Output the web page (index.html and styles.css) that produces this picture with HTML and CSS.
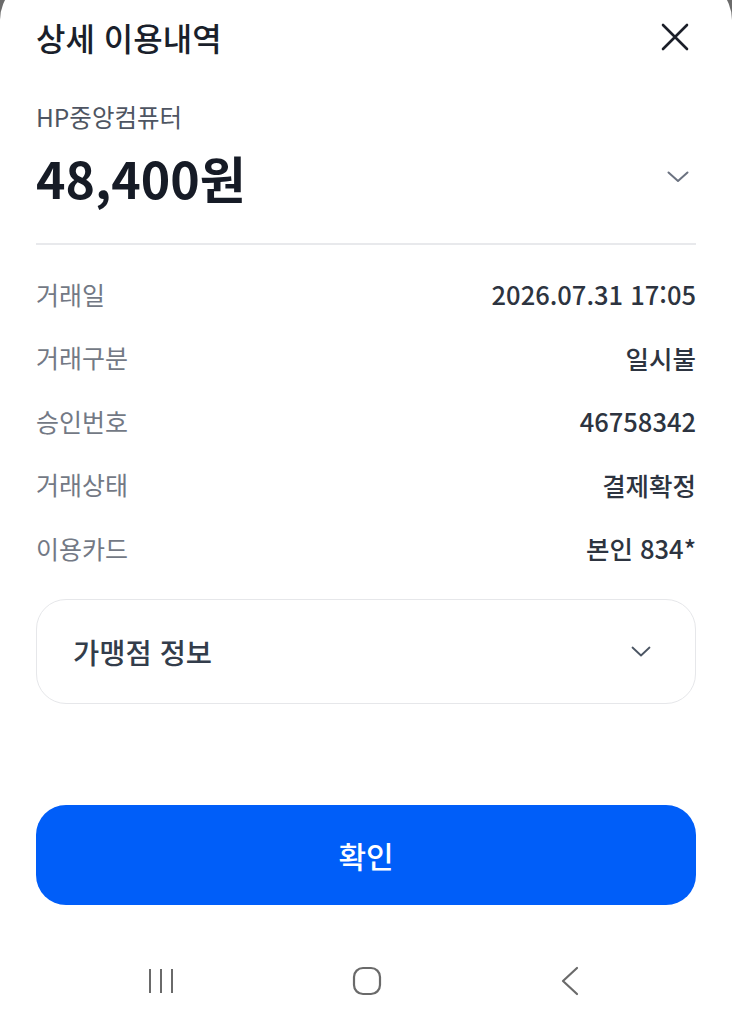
FILE: index.html
```html
<!DOCTYPE html>
<html lang="ko">
<head>
    <meta charset="UTF-8">
    <title>상세 이용내역</title>
    <link rel="stylesheet" href="styles.css">
</head>
<body>
    <div class="sheet">
        <div class="header">
            <h1 class="title">상세 이용내역</h1>
            <button class="close" type="button" aria-label="닫기">
                <svg width="28" height="28" viewBox="0 0 28 28"><path d="M2 2 L26 26 M26 2 L2 26" stroke="#1b1f29" stroke-width="2.6" stroke-linecap="round" fill="none"/></svg>
            </button>
        </div>

        <div class="summary">
            <p class="merchant">HP중앙컴퓨터</p>
            <div class="amount-row">
                <span class="amount">48,400원</span>
                <svg class="chev" width="22" height="12" viewBox="0 0 22 12"><path d="M1.5 1.5 L11 10 L20.5 1.5" stroke="#6b7280" stroke-width="2" stroke-linecap="round" stroke-linejoin="round" fill="none"/></svg>
            </div>
        </div>

        <div class="details">
            <div class="row"><span class="label">거래일</span><span class="value">2026.07.31 17:05</span></div>
            <div class="row"><span class="label">거래구분</span><span class="value">일시불</span></div>
            <div class="row"><span class="label">승인번호</span><span class="value">46758342</span></div>
            <div class="row"><span class="label">거래상태</span><span class="value">결제확정</span></div>
            <div class="row"><span class="label">이용카드</span><span class="value">본인 834*</span></div>
        </div>

        <div class="card">
            <span class="card-title">가맹점 정보</span>
            <svg width="20" height="11" viewBox="0 0 20 11"><path d="M1.5 1.5 L10 9.5 L18.5 1.5" stroke="#4b5563" stroke-width="1.8" stroke-linecap="round" stroke-linejoin="round" fill="none"/></svg>
        </div>

        <button class="confirm" type="button">확인</button>

        <div class="navbar">
            <svg width="28" height="28" viewBox="0 0 28 28"><path d="M3 2 V26 M14 2 V26 M25 2 V26" stroke="#6a6a6a" stroke-width="2" fill="none"/></svg>
            <svg width="30" height="30" viewBox="0 0 30 30"><rect x="2" y="2" width="26" height="26" rx="9" stroke="#6a6a6a" stroke-width="2.2" fill="none"/></svg>
            <svg width="22" height="30" viewBox="0 0 22 30"><path d="M18 2 L4 15 L18 28" stroke="#6a6a6a" stroke-width="2.2" stroke-linecap="round" stroke-linejoin="round" fill="none"/></svg>
        </div>
    </div>
</body>
</html>
```

FILE: styles.css
```css
html, body {
    margin: 0;
    padding: 0;
}
body {
    background-color: #6b6b6b;
    font-family: "Noto Sans CJK KR", "Noto Sans", sans-serif;
    overflow: hidden;
}
.sheet {
    margin-top: -22px;
    padding: 22px 36px 0 36px;
    height: 1046px;
    box-sizing: border-box;
    background-color: #fff;
    border-radius: 42px 42px 0 0;
}
.header {
    display: flex;
    justify-content: space-between;
    align-items: center;
    height: 74px;
}
.title {
    margin: 0;
    font-size: 32px;
    font-weight: 500;
    color: #1a1f2b;
}
.close {
    border: none;
    background: none;
    padding: 0;
    margin-right: 7px;
    display: flex;
}
.summary {
    padding-top: 25px;
    padding-bottom: 24px;
    border-bottom: 2px solid #e8e9ec;
}
.merchant {
    margin: 0;
    font-size: 24.5px;
    color: #4e5562;
    line-height: 36px;
}
.amount-row {
    display: flex;
    justify-content: space-between;
    align-items: center;
    height: 84px;
}
.amount {
    font-size: 50px;
    font-weight: 700;
    color: #161b26;
}
.chev {
    margin-right: 7px;
}
.details {
    padding-top: 17px;
}
.row {
    display: flex;
    justify-content: space-between;
    align-items: center;
    height: 63.5px;
    font-size: 25px;
}
.label {
    color: #737985;
}
.value {
    color: #2d3440;
    font-weight: 500;
    font-size: 25.5px;
}
.card {
    margin-top: 19px;
    height: 105px;
    box-sizing: border-box;
    border: 1.5px solid #e6e7ea;
    border-radius: 30px;
    display: flex;
    justify-content: space-between;
    align-items: center;
    padding: 0 44px 0 36px;
}
.card-title {
    font-size: 28.5px;
    font-weight: 500;
    color: #333d4b;
}
.confirm {
    display: block;
    width: 100%;
    margin-top: 101px;
    height: 100px;
    border: none;
    border-radius: 30px;
    background-color: #005ef9;
    color: #fff;
    font-family: inherit;
    font-size: 30px;
    font-weight: 500;
}
.navbar {
    display: flex;
    justify-content: space-between;
    align-items: center;
    height: 60px;
    margin-top: 46px;
    padding: 0 115px 0 111px;
}
```
